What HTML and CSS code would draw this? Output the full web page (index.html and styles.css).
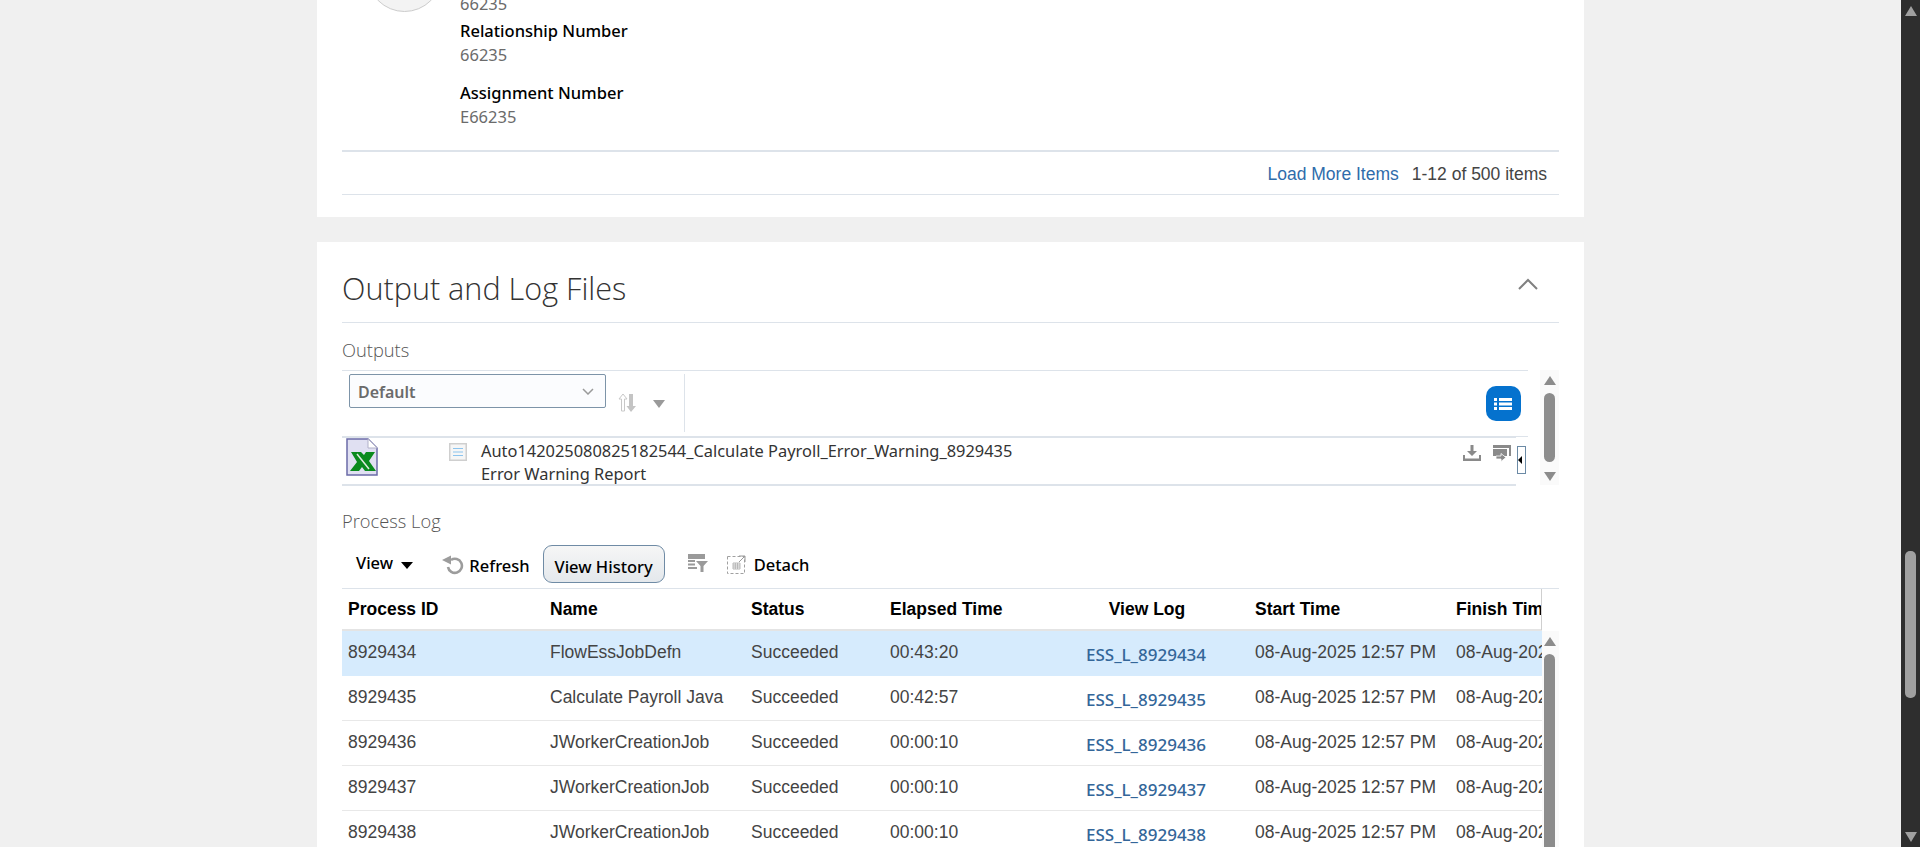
FILE: index.html
```html
<!DOCTYPE html>
<html><head>
<title>Output and Log Files</title>
<meta name="viewport" content="width=device-width, initial-scale=1">
<link rel="stylesheet" href="styles.css">
</head><body>
<div class="page">
<div class="content">

<div class="card card-people">
  <div class="person">
    <div class="avatar"></div>
    <div class="fields">
      <div class="value first">66235</div>
      <div class="field">
        <div class="label">Relationship Number</div>
        <div class="value">66235</div>
      </div>
      <div class="field">
        <div class="label">Assignment Number</div>
        <div class="value">E66235</div>
      </div>
    </div>
  </div>
  <div class="pager">
    <a class="pager-link">Load More Items</a>
    <span>1-12 of 500 items</span>
  </div>
</div>

<div class="card card-output">
  <div class="card-head">
    <h2>Output and Log Files</h2>
    <svg class="collapse" width="20" height="12" viewBox="0 0 20 12"><path d="M1 11 L10 2 L19 11" fill="none" stroke="#808080" stroke-width="2"/></svg>
  </div>

  <div class="outputs">
    <div class="outputs-main">
      <h3 class="sub-head">Outputs</h3>
      <div class="outputs-bar">
        <div class="select">
          <span>Default</span>
          <svg width="12" height="7" viewBox="0 0 12 7"><path d="M1 1 L6 6 L11 1" fill="none" stroke="#9a9a9a" stroke-width="1.5"/></svg>
        </div>
        <svg class="sort" width="18" height="20" viewBox="0 0 18 20"><path d="M5 1 L1 6 H3.5 V18 H6.5 V6 H9 Z" fill="#fff" stroke="#c8c8c8"/><path d="M11 1 H15 V13 H18 L13 19 L8.5 13 H11 Z" fill="#c4c4c4"/></svg>
        <span class="tri-down grey"></span>
        <div class="bar-sep"></div>
        <button class="list-btn">
          <svg width="20" height="14" viewBox="0 0 20 14" fill="#fff"><rect x="0" y="1" width="3" height="3"/><rect x="5" y="1" width="13" height="3"/><rect x="0" y="5.5" width="3" height="3"/><rect x="5" y="5.5" width="13" height="3"/><rect x="0" y="10" width="3" height="3"/><rect x="5" y="10" width="13" height="3"/></svg>
        </button>
      </div>
      <div class="output-row">
        <svg class="xls" width="32" height="38" viewBox="0 0 32 38">
          <path d="M1 1 H22 L31 10 V37 H1 Z" fill="#e0e0f2" stroke="#6b6ba8" stroke-width="1.5"/>
          <path d="M22 1 V10 H31 Z" fill="#fff" stroke="#b0b0c8"/>
          <path d="M5 14 H15 L18 17 L20 14 H29 L23 23 L30 33 H19 L16 29 L13 33 H4 L11 24 Z" fill="#0a8a1e"/>
          <path d="M11 16 L23 31" stroke="#dfeadf" stroke-width="1.5"/>
        </svg>
        <svg class="doc" width="18" height="18" viewBox="0 0 18 18">
          <rect x="0.75" y="0.75" width="16.5" height="16.5" fill="#f6f6f6" stroke="#cfcfcf" stroke-width="1.5"/>
          <path d="M4 5.5 H14 M4 9 H14 M4 12.5 H14" stroke="#8cc4ee" stroke-width="1.2"/>
        </svg>
        <div class="output-text">
          <div>Auto142025080825182544_Calculate Payroll_Error_Warning_8929435</div>
          <div>Error Warning Report</div>
        </div>
        <svg class="row-icon" width="18" height="16" viewBox="0 0 18 16" fill="#8a8a8a"><path d="M7.5 0 H10.5 V6 H14 L9 11 L4 6 H7.5 Z"/><path d="M0 10 H2 V13.5 H16 V10 H18 V16 H0 Z"/></svg>
        <svg class="row-icon" width="18" height="17" viewBox="0 0 18 17" fill="#8a8a8a"><path d="M0 0 H18 V11 H16 V3 H0 Z"/><path d="M0 4 H14 V11 H0 Z"/><path d="M3 11 H8 V8.5 L13 12.5 L8 16.5 V14 H3 Z" stroke="#fff" stroke-width="0.8"/></svg>
        <div class="splitter"><span></span></div>
      </div>
    </div>
    <div class="panel-scroll">
      <span class="arrow-up"></span>
      <span class="thumb"></span>
      <span class="arrow-down"></span>
    </div>
  </div>

  <h3 class="sub-head log-head">Process Log</h3>
  <div class="log-bar">
    <span class="view-menu">View <i class="tri-down black"></i></span>
    <span class="tool refresh">
      <svg width="22" height="20" viewBox="0 0 22 20"><path d="M9 5 A7 7 0 1 1 6 12" fill="none" stroke="#9c9c9c" stroke-width="2.6"/><path d="M0 5 L9 0.5 V9.5 Z" fill="#9c9c9c"/></svg>
      Refresh
    </span>
    <button class="history-btn">View History</button>
    <svg class="filter" width="20" height="18" viewBox="0 0 20 18" fill="#9a9a9a"><path d="M0 0 H17 V5 H0 Z M0 6 H7 V8 H0 Z M0 9.5 H7 V11.5 H0 Z M0 13 H9 V15 H0 Z"/><path d="M8 7 H20 L15.5 12 V18 H12.5 V12 Z"/></svg>
    <span class="tool detach">
      <svg width="19" height="19" viewBox="0 0 19 19"><rect x="0.5" y="1.5" width="17" height="17" fill="none" stroke="#a0a0a0" stroke-dasharray="3 2"/><path d="M6 8 H13 V14 H6 Z M6 10 H13 M6 12 H13 M8.3 8 V14 M10.6 8 V14" fill="none" stroke="#a8a8a8" stroke-width="0.8"/><path d="M12 1 H18 V7 M18 1 L12 7" fill="none" stroke="#9a9a9a"/></svg>
      Detach
    </span>
  </div>

  <div class="log-wrap">
    <div class="log-table-box">
      <table class="log-table">
        <colgroup><col class="c-id"><col class="c-name"><col class="c-status"><col class="c-elapsed"><col class="c-log"><col class="c-start"><col class="c-finish"></colgroup>
        <thead><tr><th>Process ID</th><th>Name</th><th>Status</th><th>Elapsed Time</th><th class="center">View Log</th><th>Start Time</th><th>Finish Time</th></tr></thead>
        <tbody>
          <tr class="selected"><td>8929434</td><td>FlowEssJobDefn</td><td>Succeeded</td><td>00:43:20</td><td class="log-cell"><a>ESS_L_8929434</a></td><td>08-Aug-2025 12:57 PM</td><td>08-Aug-2025 12:57 PM</td></tr>
          <tr><td>8929435</td><td>Calculate Payroll Java</td><td>Succeeded</td><td>00:42:57</td><td class="log-cell"><a>ESS_L_8929435</a></td><td>08-Aug-2025 12:57 PM</td><td>08-Aug-2025 12:57 PM</td></tr>
          <tr><td>8929436</td><td>JWorkerCreationJob</td><td>Succeeded</td><td>00:00:10</td><td class="log-cell"><a>ESS_L_8929436</a></td><td>08-Aug-2025 12:57 PM</td><td>08-Aug-2025 12:57 PM</td></tr>
          <tr><td>8929437</td><td>JWorkerCreationJob</td><td>Succeeded</td><td>00:00:10</td><td class="log-cell"><a>ESS_L_8929437</a></td><td>08-Aug-2025 12:57 PM</td><td>08-Aug-2025 12:57 PM</td></tr>
          <tr><td>8929438</td><td>JWorkerCreationJob</td><td>Succeeded</td><td>00:00:10</td><td class="log-cell"><a>ESS_L_8929438</a></td><td>08-Aug-2025 12:57 PM</td><td>08-Aug-2025 12:57 PM</td></tr>
        </tbody>
      </table>
    </div>
    <div class="table-scroll">
      <span class="arrow-up"></span>
      <span class="thumb"></span>
    </div>
  </div>
</div>

</div>
<div class="page-scroll">
  <span class="page-arrow-up"></span>
  <span class="page-thumb"></span>
  <span class="page-arrow-down"></span>
</div>
</div>
</body></html>
```

FILE: styles.css
```css
html, body { margin: 0; height: 847px; overflow: hidden; }
body { background: #f0f0f0; font-family: "Noto Sans", sans-serif; font-size: 16.5px; color: #333; }
.page { display: flex; height: 847px; overflow: hidden; }
.content { width: 1267px; margin-left: 317px; margin-right: 317px; margin-top: -70px; flex: none; }
.card { background: #fff; padding: 7px 25px 22px; margin-bottom: 25px; }

/* person block */
.person { display: flex; align-items: flex-start; }
.avatar { width: 73px; height: 73px; margin-left: 25px; border: 1px solid #ccc; border-radius: 50%; background: #f3f3f3; flex: none; }
.fields { margin-left: 18px; padding-top: 55px; padding-bottom: 21px; }
.value { line-height: 24px; color: #6b6b6b; }
.value.first { margin-bottom: 3px; }
.label { line-height: 24px; color: #000; font-weight: 500; }
.field { margin-bottom: 14px; }
.field:last-child { margin-bottom: 0; }
.pager { display: flex; justify-content: flex-end; align-items: center; gap: 13px; box-sizing: content-box; height: 39px; padding-top: 3px; padding-right: 12px; border-top: 2px solid #dde3ea; border-bottom: 1px solid #dde3ea; font-family: "Liberation Sans", sans-serif; font-size: 17.5px; color: #444; }
.pager-link { color: #2f6cab; }

/* output card */
.card-output { padding-top: 0; padding-bottom: 0; }
.card-head { display: flex; justify-content: space-between; align-items: center; height: 68px; padding-top: 12px; border-bottom: 1px solid #dde3ea; }
.card-head h2 { margin: 0; font-family: "Open Sans", sans-serif; font-size: 30.6px; font-weight: 300; color: #333; }
.collapse { margin-right: 21px; margin-bottom: 8px; }
.sub-head { margin: 0; padding: 15px 0 8px; line-height: 24px; font-family: "Open Sans", sans-serif; font-size: 18.3px; font-weight: 300; color: #555; }

.outputs { display: flex; align-items: flex-start; }
.outputs-main { width: 1186px; }
.outputs-bar { display: flex; align-items: flex-start; height: 65px; border-top: 1px solid #dde3ea; border-bottom: 1px solid #dde3ea; }
.select { display: flex; justify-content: space-between; align-items: center; box-sizing: border-box; width: 257px; height: 34px; margin: 3px 0 0 7px; padding: 1px 11px 0 8px; background: #fbfcfe; border: 1px solid #7d94a8; border-radius: 2px; font-size: 16px; font-weight: 600; color: #6b6b6b; }
.sort { margin: 22px 0 0 12px; }
.tri-down { display: inline-block; width: 0; height: 0; border-left: 6px solid transparent; border-right: 6px solid transparent; border-top: 8px solid #000; }
.tri-down.grey { margin: 29px 0 0 17px; border-top-color: #9a9a9a; }
.tri-down.black { margin-left: 4px; border-left-width: 6px; border-right-width: 6px; border-top-width: 7px; }
.bar-sep { width: 1px; height: 58px; margin: 3px 0 0 19px; background: #dde3ea; }
.list-btn { display: flex; justify-content: center; align-items: center; width: 35px; height: 35px; margin: 15px 7px 0 auto; padding: 0; border: none; border-radius: 10px; background: #0572ce; }

.output-row { display: flex; align-items: flex-start; box-sizing: border-box; width: 1174px; height: 49px; border-top: 1px solid #dde3ea; border-bottom: 2px solid #dde3ea; }
.xls { margin-left: 4px; flex: none; }
.doc { margin: 5px 0 0 71px; flex: none; }
.output-text { flex: 1; margin: 1px 0 0 14px; line-height: 23px; font-size: 16.4px; color: #333; }
.row-icon { margin: 7px 12px 0 0; flex: none; }
.row-icon + .row-icon { margin-right: 6px; }
.splitter { display: flex; align-items: center; box-sizing: border-box; width: 9px; height: 28px; margin: 8px -10px 0 0; border: 1px solid #6b8aa5; background: #fff; flex: none; }
.splitter span { width: 0; height: 0; border-top: 4px solid transparent; border-bottom: 4px solid transparent; border-right: 4px solid #000; }

.panel-scroll { display: flex; flex-direction: column; align-items: center; width: 19px; height: 115px; margin: 47px 0 0 12px; padding-top: 6px; box-sizing: border-box; background: #fafafa; }
.arrow-up { width: 0; height: 0; border-left: 6px solid transparent; border-right: 6px solid transparent; border-bottom: 9px solid #8c8c8c; flex: none; }
.arrow-down { width: 0; height: 0; margin-top: 10px; border-left: 6px solid transparent; border-right: 6px solid transparent; border-top: 9px solid #8c8c8c; }
.thumb { width: 11px; border-radius: 6px; background: #8c8c8c; }
.panel-scroll .thumb { height: 69px; margin-top: 8px; }

/* process log */
.log-head { padding-top: 23px; padding-bottom: 0; }
.log-bar { display: flex; align-items: center; height: 38px; padding: 12px 0 5px; font-weight: 500; color: #000; }
.view-menu { margin: 0 0 4px 14px; }
.tool { display: flex; align-items: center; gap: 5px; }
.refresh { margin-left: 29px; margin-top: 2px; }
.history-btn { box-sizing: border-box; width: 122px; height: 38px; margin-left: 13px; padding: 5px 0 0; border: 1px solid #6f8ba5; border-radius: 9px; background: linear-gradient(#f6f6f6, #e4e8ec); font-family: "Noto Sans", sans-serif; font-size: 16.5px; font-weight: 500; color: #000; }
.filter { margin: 0 0 2px 23px; }
.detach { margin-left: 19px; gap: 8px; }

.log-wrap { display: flex; border-top: 1px solid #dde3ea; }
.log-table-box { position: relative; width: 1200px; height: 300px; overflow: hidden; flex: none; }
.log-table-box::after { content: ""; position: absolute; top: 0; right: 0; width: 1px; height: 41px; background: #cfcfcf; }
.log-table { table-layout: fixed; width: 1308px; border-collapse: separate; border-spacing: 0; font-family: "Liberation Sans", sans-serif; font-size: 17.5px; }
.c-id { width: 202px; }
.c-name { width: 201px; }
.c-status { width: 139px; }
.c-elapsed { width: 165px; }
.c-log { width: 200px; }
.c-start { width: 201px; }
.c-finish { width: 200px; }
.log-table th { box-sizing: border-box; height: 42px; padding: 0 0 0 6px; border-bottom: 2px solid #e4e4e4; text-align: left; font-weight: 700; color: #000; white-space: nowrap; overflow: hidden; }
.log-table th.center { padding: 0 4px 0 0; text-align: center; }
.log-table td { box-sizing: border-box; height: 45px; padding: 0 0 2px 6px; border-bottom: 1px solid #e8e8e8; color: #444; white-space: nowrap; overflow: hidden; }
.log-table tr.selected td { background: #d6ebfd; border-bottom-color: #d6ebfd; }
.log-table td.log-cell { padding: 2px 0 0 37px; font-family: "Noto Sans", sans-serif; font-size: 17px; font-weight: 500; color: #336699; }
.table-scroll { display: flex; flex-direction: column; align-items: flex-start; box-sizing: border-box; width: 17px; margin-top: 42px; padding: 6px 0 0 2px; background: #fafafa; }
.table-scroll .thumb { height: 300px; margin-top: 8px; }

/* browser scrollbar */
.page-scroll { display: flex; flex-direction: column; align-items: center; width: 19px; height: 847px; margin-left: auto; background: #2e2e2e; flex: none; }
.page-arrow-up { width: 0; height: 0; margin-top: 6px; border-left: 6px solid transparent; border-right: 6px solid transparent; border-bottom: 10px solid #a0a0a0; }
.page-thumb { width: 11px; height: 147px; margin-top: 535px; border-radius: 5px; background: #a0a0a0; }
.page-arrow-down { width: 0; height: 0; margin-top: 134px; border-left: 6px solid transparent; border-right: 6px solid transparent; border-top: 10px solid #a0a0a0; }
```
